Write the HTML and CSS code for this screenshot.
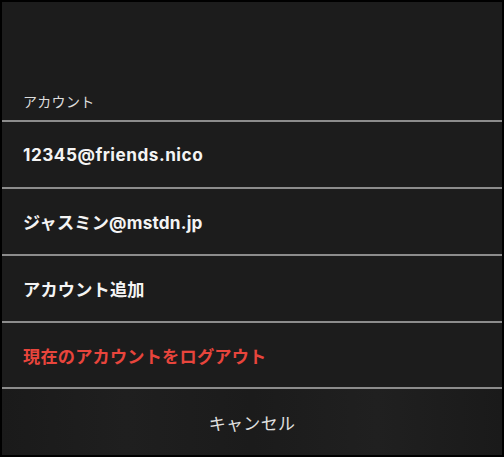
FILE: index.html
```html
<!DOCTYPE html>
<html lang="ja">
<head>
<meta charset="UTF-8">
<meta name="viewport" content="width=device-width, initial-scale=1.0">
<title>アカウント</title>
<link rel="stylesheet" href="styles.css">
</head>
<body>
  <div class="sheet">
    <div class="sheet-header">アカウント</div>

    <div class="sheet-row latin">12345@friends.nico</div>
    <div class="sheet-row">ジャスミン@mstdn.jp</div>
    <div class="sheet-row">アカウント追加</div>
    <div class="sheet-row danger">現在のアカウントをログアウト</div>

    <div class="sheet-cancel">キャンセル</div>
  </div>
</body>
</html>
```
FILE: styles.css
```css
* {
  box-sizing: border-box;
  margin: 0;
  padding: 0;
}

body {
  background-color: #000;
  font-family: "Inter", "Noto Sans CJK JP", sans-serif;
  width: 504px;
  height: 457px;
}

.sheet {
  width: 504px;
  height: 457px;
  border: 2px solid #000;
  background-color: #1c1c1c;
  display: flex;
  flex-direction: column;
}

.sheet-header {
  height: 118px;
  display: flex;
  align-items: flex-end;
  padding: 0 0 8px 21px;
  font-size: 14px;
  line-height: 20px;
  color: #dcdcdc;
  letter-spacing: 0.3px;
}

.sheet-row {
  height: 67px;
  border-top: 2px solid #8c8c8c;
  display: flex;
  align-items: center;
  padding-left: 21px;
  font-size: 17.2px;
  font-weight: 700;
  letter-spacing: 0.2px;
  color: #f4f4f4;
}

.sheet-row.latin {
  letter-spacing: 0.5px;
}

.sheet-row.danger {
  height: 66px;
  color: #e8453c;
}

.sheet-cancel {
  flex: 1;
  border-top: 2px solid #8c8c8c;
  display: flex;
  align-items: center;
  justify-content: center;
  font-size: 17px;
  letter-spacing: 0.3px;
  color: #e0e0e0;
  background: linear-gradient(90deg, #1a1a1a 0%, #1f1f1f 25%, #1b1b1b 50%, #202020 75%, #1a1a1a 100%);
}
```
